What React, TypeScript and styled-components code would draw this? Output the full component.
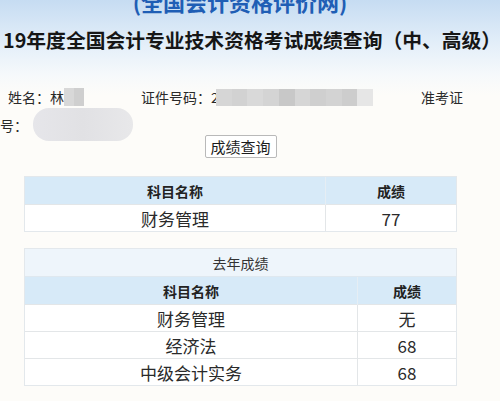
import styled, { createGlobalStyle } from 'styled-components';

const GlobalStyle = createGlobalStyle`
  html, body {
    margin: 0;
    padding: 0;
    background: #fdfcf9;
  }
  body {
    width: 500px;
    height: 401px;
    overflow: hidden;
    font-family: "Noto Sans CJK SC", "Noto Sans", sans-serif;
    color: #222;
  }
`;

const Page = styled.div`
  width: 500px;
  height: 401px;
  overflow: hidden;
  background: linear-gradient(to bottom, #c6dcf2 0px, #e4eff9 45px, #f6f9fb 75px, #fdfcf9 95px);
`;

const SiteName = styled.div`
  margin-top: -11px;
  height: 25px;
  font-size: 22px;
  line-height: 25px;
  font-weight: 700;
  color: #1f5eb5;
  text-align: center;
  padding-right: 20px;
`;

const Title = styled.h1`
  margin: 15px 0 0 3px;
  font-size: 19.8px;
  line-height: 22px;
  font-weight: 700;
  color: #161616;
  white-space: nowrap;
`;

const InfoBlock = styled.div`
  margin-top: 36px;
  font-size: 14px;
  line-height: 20px;
  color: #2a2a2a;
`;

const InfoLine = styled.div<{ $indent?: number }>`
  display: flex;
  align-items: center;
  height: 20px;
  padding-left: ${p => p.$indent ?? 0}px;
`;

const Field = styled.span<{ $gap?: number }>`
  display: inline-flex;
  align-items: center;
  margin-right: ${p => p.$gap ?? 0}px;
  white-space: nowrap;
`;

const CutDigit = styled.span`
  display: inline-block;
  width: 5px;
  overflow: hidden;
`;

const Mosaic = styled.span<{ $w: number; $h: number }>`
  display: inline-flex;
  width: ${p => p.$w}px;
  height: ${p => p.$h}px;
`;

const Cell = styled.span<{ $c: string }>`
  flex: 1;
  background: ${p => p.$c};
`;

const Pill = styled.span`
  display: inline-block;
  width: 100px;
  height: 33px;
  margin-left: 5px;
  border-radius: 16px;
  background: linear-gradient(to right, #e6e6ea, #e1e1e4 50%, #e8e8ea);
`;

const SecondLine = styled.div`
  display: flex;
  align-items: center;
  margin-top: 1px;
  height: 33px;
`;

const ButtonRow = styled.div`
  display: flex;
  justify-content: center;
  margin-top: -6px;
  padding-right: 19px;
`;

const QueryButton = styled.button`
  height: 23px;
  width: 72px;
  padding: 0;
  border: 1px solid #b9b9b9;
  border-radius: 2px;
  background: #fff;
  font-family: inherit;
  font-size: 15px;
  line-height: 20px;
  color: #1c1c1c;
`;

const Table = styled.table<{ $top: number }>`
  margin: ${p => p.$top}px 0 0 25px;
  width: 431px;
  border-collapse: collapse;
  background: #fff;
  box-shadow: 0 0 0 1px #e3e8ec;
`;

const Caption = styled.td`
  height: 27px;
  padding: 0;
  text-align: center;
  font-size: 14px;
  color: #333;
  background: #eef5fb;
  border-bottom: 1px solid #dfe8ef;
`;

const Head = styled.th<{ $w?: number }>`
  height: 27px;
  padding: 0;
  width: ${p => (p.$w ? `${p.$w}px` : 'auto')};
  background: #d7eaf8;
  font-size: 14px;
  font-weight: 700;
  color: #222;
  border-left: 1px solid #e6eef4;
  &:first-child {
    border-left: none;
  }
`;

const Data = styled.td`
  height: 26px;
  padding: 0;
  text-align: center;
  font-size: 17px;
  color: #2a2a2a;
  border-top: 1px solid #e3e6e8;
  border-left: 1px solid #e3e6e8;
  &:first-child {
    border-left: none;
  }
`;

const nameBlur = ['#d8d8d8', '#cfcfcf'];
const idBlur = ['#d6d6d6', '#d2d2d2', '#d9d9d9', '#d4d4d4', '#c8c8c8', '#d6d6d6', '#cfcfcf', '#d3d3d3', '#cdcdcd', '#e6e6e6'];

const rows2 = [
  { name: '财务管理', score: '无' },
  { name: '经济法', score: '68' },
  { name: '中级会计实务', score: '68' },
];

export default function App() {
  return (
    <>
      <GlobalStyle />
      <Page>
        <SiteName>(全国会计资格评价网)</SiteName>
        <Title>19年度全国会计专业技术资格考试成绩查询（中、高级）</Title>
        <InfoBlock>
          <InfoLine $indent={8}>
            <Field $gap={57}>
              姓名：林
              <Mosaic $w={20} $h={18}>
                {nameBlur.map((c, i) => <Cell key={i} $c={c} />)}
              </Mosaic>
            </Field>
            <Field $gap={48}>
              证件号码：<CutDigit>2</CutDigit>
              <Mosaic $w={157} $h={17}>
                {idBlur.map((c, i) => <Cell key={i} $c={c} />)}
              </Mosaic>
            </Field>
            <Field>准考证</Field>
          </InfoLine>
          <SecondLine>
            <Field>号：</Field>
            <Pill />
          </SecondLine>
        </InfoBlock>
        <ButtonRow>
          <QueryButton>成绩查询</QueryButton>
        </ButtonRow>
        <Table $top={19}>
          <thead>
            <tr>
              <Head $w={300}>科目名称</Head>
              <Head>成绩</Head>
            </tr>
          </thead>
          <tbody>
            <tr>
              <Data>财务管理</Data>
              <Data>77</Data>
            </tr>
          </tbody>
        </Table>
        <Table $top={18}>
          <thead>
            <tr>
              <Caption colSpan={2}>去年成绩</Caption>
            </tr>
            <tr>
              <Head $w={332}>科目名称</Head>
              <Head>成绩</Head>
            </tr>
          </thead>
          <tbody>
            {rows2.map(r => (
              <tr key={r.name}>
                <Data>{r.name}</Data>
                <Data>{r.score}</Data>
              </tr>
            ))}
          </tbody>
        </Table>
      </Page>
    </>
  );
}
